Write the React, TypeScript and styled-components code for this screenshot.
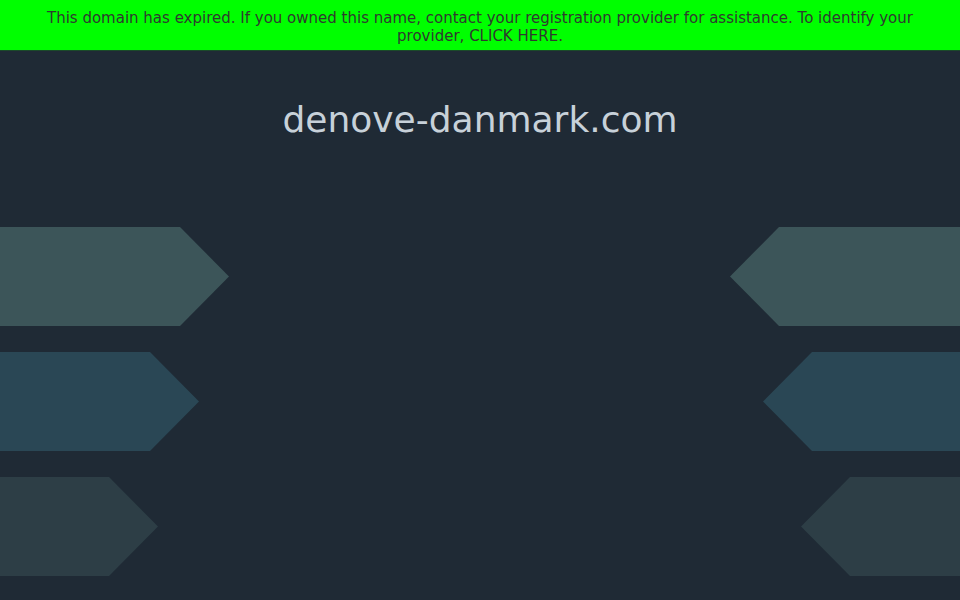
import styled, { createGlobalStyle } from "styled-components";

const GlobalStyle = createGlobalStyle`
  html, body {
    margin: 0;
    padding: 0;
    background: #1f2a35;
  }
  body {
    font-family: "DejaVu Sans", "Liberation Sans", sans-serif;
  }
`;

const Page = styled.div`
  width: 960px;
  height: 600px;
  overflow: hidden;
  display: flex;
  flex-direction: column;
  background: #1f2a35;
`;

const Banner = styled.div`
  height: 51px;
  box-sizing: border-box;
  padding: 9px 40px 0;
  background: #00ff00;
  border-bottom: 1px solid #1b4a2a;
  color: #2f3a2f;
  font-size: 15px;
  line-height: 18px;
  text-align: center;
`;

const BannerLink = styled.a`
  color: inherit;
  text-decoration: none;
`;

const Title = styled.h1`
  margin: 48px 0 0;
  font-size: 36px;
  font-weight: 400;
  line-height: 42px;
  color: #c7d1d9;
  text-align: center;
`;

const Shapes = styled.div`
  margin-top: 86px;
  display: flex;
  flex-direction: column;
  gap: 26px;
`;

const Row = styled.div`
  display: flex;
  justify-content: space-between;
  height: 99px;
`;

const Arrow = styled.div<{ $color: string; $width: number; $side: "left" | "right" }>`
  width: ${({ $width }) => $width}px;
  height: 100%;
  background: ${({ $color }) => $color};
  clip-path: ${({ $side }) =>
    $side === "left"
      ? "polygon(0 0, calc(100% - 49px) 0, 100% 50%, calc(100% - 49px) 100%, 0 100%)"
      : "polygon(49px 0, 100% 0, 100% 100%, 49px 100%, 0 50%)"};
`;

const rows = [
  { color: "#3c5559", left: 229, right: 230 },
  { color: "#2a4755", left: 199, right: 197 },
  { color: "#2d3e46", left: 158, right: 159 },
];

export default function App() {
  return (
    <Page>
      <GlobalStyle />
      <Banner>
        This domain has expired. If you owned this name, contact your registration provider for
        assistance. To identify your provider, <BannerLink href="#">CLICK HERE</BannerLink>.
      </Banner>
      <Title>denove-danmark.com</Title>
      <Shapes>
        {rows.map((r, i) => (
          <Row key={i}>
            <Arrow $color={r.color} $width={r.left} $side="left" />
            <Arrow $color={r.color} $width={r.right} $side="right" />
          </Row>
        ))}
      </Shapes>
    </Page>
  );
}
